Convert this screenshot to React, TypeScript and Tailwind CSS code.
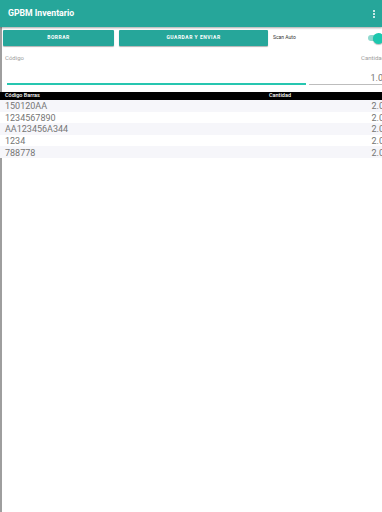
const rows = [
  { code: "150120AA", qty: "2.0" },
  { code: "1234567890", qty: "2.0" },
  { code: "AA123456A344", qty: "2.0" },
  { code: "1234", qty: "2.0" },
  { code: "788778", qty: "2.0" },
];

export default function App() {
  return (
    <div
      className="w-[382px] h-[512px] overflow-hidden bg-white relative"
      style={{ fontFamily: "Roboto, 'Liberation Sans', sans-serif" }}
    >
      {/* Toolbar */}
      <div className="h-[27px] bg-[#26a69a] flex items-center justify-between pl-[8px] pr-[7px] shadow-[0_1px_2px_rgba(0,0,0,0.35)] relative z-10">
        <span className="text-white text-[8.7px] font-bold leading-none">GPBM Inventario</span>
        <div className="flex flex-col gap-[1px] items-center">
          <span className="w-[2px] h-[2px] bg-white rounded-full" />
          <span className="w-[2px] h-[2px] bg-white rounded-full" />
          <span className="w-[2px] h-[2px] bg-white rounded-full" />
        </div>
      </div>

      <div className="flex">
        {/* left edge bar */}
        <div className="w-[2px] h-[485px] bg-[#9e9e9e] shrink-0" />

        <div className="w-[384px] shrink-0 -ml-[2px]">
          {/* Buttons row */}
          <div className="flex items-center h-[16px] mt-[3px] pl-[3px]">
            <div className="w-[111px] h-[16px] bg-[#26a69a] rounded-[1px] shadow-[0_1px_1px_rgba(0,0,0,0.3)] flex items-center justify-center">
              <span className="text-white text-[5px] font-bold tracking-[0.5px]">BORRAR</span>
            </div>
            <div className="w-[149px] h-[16px] ml-[5px] bg-[#26a69a] rounded-[1px] shadow-[0_1px_1px_rgba(0,0,0,0.3)] flex items-center justify-center">
              <span className="text-white text-[5px] font-bold tracking-[0.5px]">GUARDAR Y ENVIAR</span>
            </div>
            <span className="ml-[5px] text-[5px] text-[#333]">Scan Auto</span>
            <div className="ml-auto relative w-[16px] h-[12px]">
              <div className="absolute left-[0px] top-[3px] w-[16px] h-[6px] rounded-full bg-[#8fd9cf]" />
              <div className="absolute left-[5px] top-[0.5px] w-[11px] h-[11px] rounded-full bg-[#1cc7ae] shadow-[0_1px_1px_rgba(0,0,0,0.25)]" />
            </div>
          </div>

          {/* Input labels */}
          <div className="flex justify-between h-[10px] mt-[6px] pl-[5px] items-center">
            <span className="text-[6px] text-[#9e9e9e]">Código</span>
            <span className="text-[6px] text-[#9e9e9e] -mr-[1px]">Cantidad</span>
          </div>

          {/* Inputs */}
          <div className="flex items-end h-[23px] pl-[7px]">
            <div className="w-[299px] h-[2px] bg-[#26c6b0]" />
            <div className="ml-[3px] flex-1 flex flex-col items-end">
              <span className="text-[9px] text-[#757575] leading-none mb-[1px] mr-[1px]">1.0</span>
              <div className="w-full h-[1px] bg-[#bdbdbd] mb-[0.5px]" />
            </div>
          </div>

          {/* Table header */}
          <div className="mt-[7px] h-[8px] bg-black flex items-center text-white text-[5.5px] font-medium leading-none">
            <span className="pl-[5px] w-[269px]">Código Barras</span>
            <span>Cantidad</span>
          </div>

          {/* Rows */}
          {rows.map((r, i) => (
            <div
              key={i}
              className={`h-[11.6px] flex items-center justify-between pl-[5px] pt-[2px] text-[9px] text-[#757575] leading-none ${
                i % 2 === 0 ? "bg-[#f6f6fa]" : "bg-white"
              }`}
            >
              <span>{r.code}</span>
              <span>{r.qty}</span>
            </div>
          ))}
        </div>
      </div>
    </div>
  );
}
